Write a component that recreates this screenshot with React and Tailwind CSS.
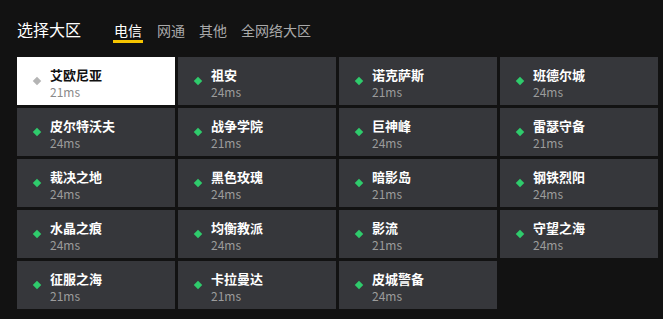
const servers = [
  { name: '艾欧尼亚', ping: '21ms', active: true },
  { name: '祖安', ping: '24ms' },
  { name: '诺克萨斯', ping: '21ms' },
  { name: '班德尔城', ping: '24ms' },
  { name: '皮尔特沃夫', ping: '24ms' },
  { name: '战争学院', ping: '21ms' },
  { name: '巨神峰', ping: '24ms' },
  { name: '雷瑟守备', ping: '21ms' },
  { name: '裁决之地', ping: '24ms' },
  { name: '黑色玫瑰', ping: '24ms' },
  { name: '暗影岛', ping: '21ms' },
  { name: '钢铁烈阳', ping: '24ms' },
  { name: '水晶之痕', ping: '24ms' },
  { name: '均衡教派', ping: '24ms' },
  { name: '影流', ping: '21ms' },
  { name: '守望之海', ping: '24ms' },
  { name: '征服之海', ping: '21ms' },
  { name: '卡拉曼达', ping: '21ms' },
  { name: '皮城警备', ping: '24ms' },
];

const tabs = ['电信', '网通', '其他', '全网络大区'];

const ServerCard = ({ server }) => (
  <div
    className={
      server.active
        ? 'h-[48px] flex items-center bg-white'
        : 'h-[48px] flex items-center bg-[#36373b]'
    }
  >
    <span
      className={
        server.active
          ? 'ml-[17px] w-[6px] h-[6px] rotate-45 bg-[#b4b4b4]'
          : 'ml-[17px] w-[6px] h-[6px] rotate-45 bg-[#2fcb6c]'
      }
    />
    <div className="ml-[10px] self-start pt-[9px] flex flex-col">
      <span
        className={
          server.active
            ? 'text-[13px] leading-[18px] font-bold text-[#111]'
            : 'text-[13px] leading-[18px] font-bold text-white'
        }
      >
        {server.name}
      </span>
      <span
        className={
          server.active
            ? 'text-[12px] leading-[16px] text-[#8a8a8a]'
            : 'text-[12px] leading-[16px] text-[#9c9c9c]'
        }
      >
        {server.ping}
      </span>
    </div>
  </div>
);

export default function App() {
  return (
    <div
      className="w-full h-[319px] bg-[#121212] pl-[17px] pt-[18px]"
      style={{ fontFamily: '"Noto Sans CJK SC", "Noto Sans", sans-serif' }}
    >
      <div className="flex items-start h-[39px]">
        <span className="text-[16px] leading-[22px] text-white">选择大区</span>
        <div className="flex ml-[32px] gap-[14px]">
          {tabs.map((tab, i) => (
            <div key={tab} className="flex flex-col items-center">
              <span
                className={
                  i === 0
                    ? 'text-[14px] leading-[20px] mt-[2px] text-white'
                    : 'text-[14px] leading-[20px] mt-[2px] text-[#a9a9a9]'
                }
              >
                {tab}
              </span>
              {i === 0 && <span className="w-[30px] h-[3px] bg-[#f5c400]" />}
            </div>
          ))}
        </div>
      </div>
      <div className="grid grid-cols-4 gap-[3px] w-[641px]">
        {servers.map((s) => (
          <ServerCard key={s.name} server={s} />
        ))}
      </div>
    </div>
  );
}
